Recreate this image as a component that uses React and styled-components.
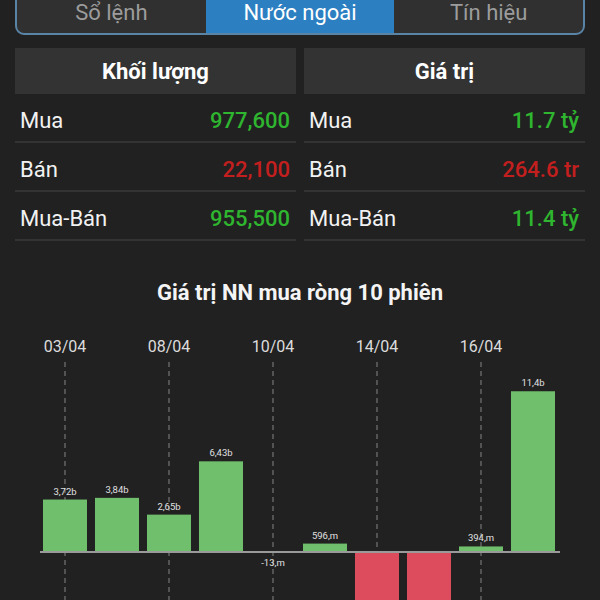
import styled, { createGlobalStyle } from 'styled-components';

const GlobalStyle = createGlobalStyle`
  body {
    margin: 0;
    background-color: #212121;
    font-family: Roboto, "Liberation Sans", sans-serif;
  }
`;

const tabs = ['Sổ lệnh', 'Nước ngoài', 'Tín hiệu'];

const volumeRows = [
  { label: 'Mua', value: '977,600', tone: 'up' },
  { label: 'Bán', value: '22,100', tone: 'down' },
  { label: 'Mua-Bán', value: '955,500', tone: 'up' }
];

const valueRows = [
  { label: 'Mua', value: '11.7 tỷ', tone: 'up' },
  { label: 'Bán', value: '264.6 tr', tone: 'down' },
  { label: 'Mua-Bán', value: '11.4 tỷ', tone: 'up' }
];

// label text is left out where it falls below the visible area
const sessions = [
  { date: '03/04', value: 3.72, text: '3,72b' },
  { value: 3.84, text: '3,84b' },
  { date: '08/04', value: 2.65, text: '2,65b' },
  { value: 6.43, text: '6,43b' },
  { date: '10/04', value: -0.013, text: '-13,m' },
  { value: 0.596, text: '596,m' },
  { date: '14/04', value: -4.2 },
  { value: -4.0 },
  { date: '16/04', value: 0.394, text: '394,m' },
  { value: 11.4, text: '11,4b' }
];

// chart coords are relative to the svg top
const ZERO = 234;
const SCALE = 14.1;
const BAR_W = 44;
const STEP = 52;
const FIRST = 43;

const NetChart = () => (
  <ChartSvg width="600" height="282" viewBox="0 0 600 282">
    {sessions.map((s, i) =>
      s.date ? (
        <g key={'d' + i}>
          <text x={FIRST + i * STEP + BAR_W / 2} y="34" textAnchor="middle" fill="#dcdcdc" fontSize="16">
            {s.date}
          </text>
          <line
            x1={FIRST + i * STEP + BAR_W / 2}
            x2={FIRST + i * STEP + BAR_W / 2}
            y1="44"
            y2="282"
            stroke="#6e6e6e"
            strokeWidth="1.3"
            strokeDasharray="5 4"
          />
        </g>
      ) : null
    )}
    {sessions.map((s, i) => {
      const h = Math.abs(s.value) * SCALE;
      const x = FIRST + i * STEP;
      const up = s.value >= 0;
      return (
        <g key={'b' + i}>
          <rect
            x={x}
            y={up ? ZERO - h : ZERO}
            width={BAR_W}
            height={Math.max(h, 0.5)}
            fill={up ? '#70bf6c' : '#dc4c5d'}
          />
          {s.text && (
            <text
              x={x + BAR_W / 2}
              y={up ? ZERO - h - 5 : ZERO + h + 14}
              textAnchor="middle"
              fill="#e0e0e0"
              fontSize="9.5"
            >
              {s.text}
            </text>
          )}
        </g>
      );
    })}
    <line x1="40" x2="560" y1={ZERO} y2={ZERO} stroke="#9a9a9a" strokeWidth="2" />
  </ChartSvg>
);

const App = () => (
  <Page>
    <GlobalStyle />
    <TabBar>
      {tabs.map((t, i) => (
        <Tab key={t} $active={i === 1}>
          {t}
        </Tab>
      ))}
    </TabBar>

    <StatsGrid>
      <Column>
        <HeaderCell>Khối lượng</HeaderCell>
        {volumeRows.map((r) => (
          <Row key={r.label}>
            <Label>{r.label}</Label>
            <Value $tone={r.tone}>{r.value}</Value>
          </Row>
        ))}
      </Column>
      <Column>
        <HeaderCell>Giá trị</HeaderCell>
        {valueRows.map((r) => (
          <Row key={r.label}>
            <Label>{r.label}</Label>
            <Value $tone={r.tone}>{r.value}</Value>
          </Row>
        ))}
      </Column>
    </StatsGrid>

    <ChartTitle>Giá trị NN mua ròng 10 phiên</ChartTitle>
    <NetChart />
  </Page>
);

const Page = styled.div`
  width: 600px;
  height: 600px;
  overflow: hidden;
  background-color: #212121;
`;

const TabBar = styled.div`
  display: flex;
  margin: -12px 15px 0;
  height: 43px;
  border: 2px solid #5a84a6;
  border-radius: 9px;
  overflow: hidden;
  background-color: #303030;
`;

const Tab = styled.div`
  flex: 1;
  display: flex;
  align-items: center;
  justify-content: center;
  padding-top: 1px;
  font-size: 22px;
  color: ${(p) => (p.$active ? '#ffffff' : '#9c9c9c')};
  background-color: ${(p) => (p.$active ? '#2c7fc1' : 'transparent')};
`;

const StatsGrid = styled.div`
  display: grid;
  grid-template-columns: 1fr 1fr;
  column-gap: 8px;
  margin: 13px 15px 0;
`;

const Column = styled.div`
  display: flex;
  flex-direction: column;
`;

const HeaderCell = styled.div`
  height: 46px;
  display: flex;
  align-items: center;
  justify-content: center;
  background-color: #333333;
  color: #ffffff;
  font-size: 22px;
  font-weight: 700;
`;

const Row = styled.div`
  box-sizing: border-box;
  height: 49px;
  display: flex;
  align-items: center;
  justify-content: space-between;
  padding: 6px 6px 0 5px;
  border-bottom: 2px solid #333333;
  font-size: 22px;
`;

const Label = styled.span`
  color: #f2f2f2;
`;

const Value = styled.span`
  font-weight: 500;
  color: ${(p) => (p.$tone === 'up' ? '#2fb52f' : '#c41f1f')};
`;

const ChartTitle = styled.div`
  margin-top: 39px;
  text-align: center;
  color: #f4f4f4;
  font-size: 22px;
  font-weight: 700;
`;

const ChartSvg = styled.svg`
  display: block;
  margin-top: 13px;
  font-family: Roboto, "Liberation Sans", sans-serif;
`;

export default App;
